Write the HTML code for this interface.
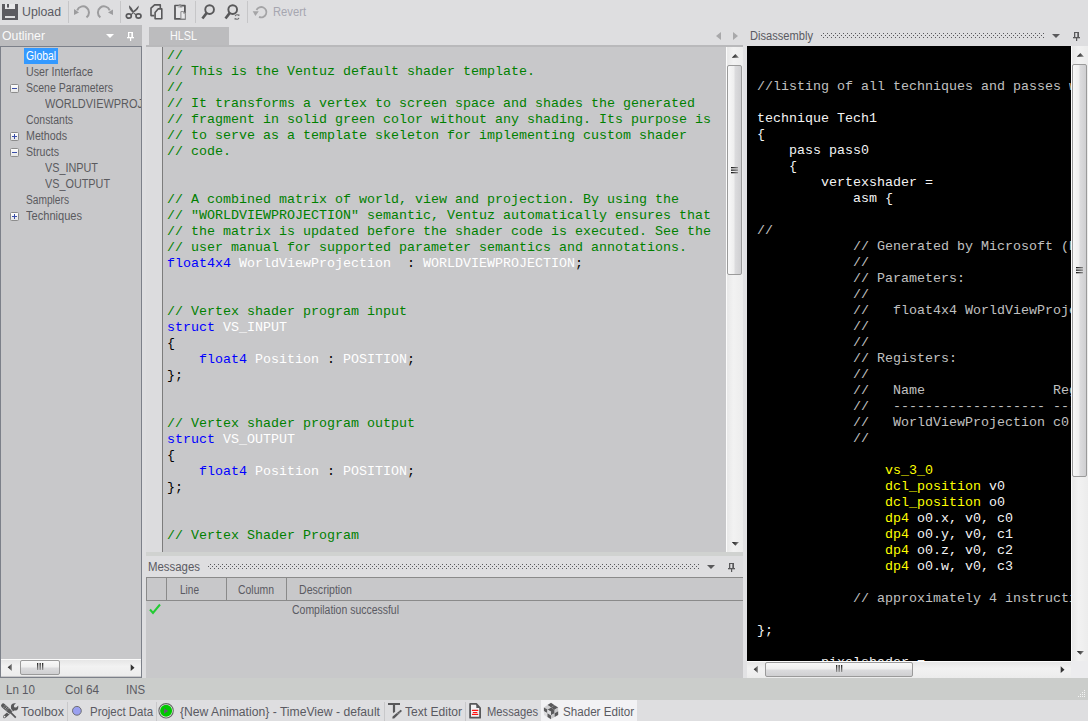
<!DOCTYPE html>
<html><head><meta charset="utf-8">
<style>
*{margin:0;padding:0;box-sizing:border-box}
html,body{width:1088px;height:721px;overflow:hidden;background:#dedee0;font-family:"Liberation Sans",sans-serif;font-size:12px;color:#4e4e50}
.a{position:absolute}
.t{position:absolute;white-space:pre;transform-origin:0 0}
.mono{font-family:"Liberation Mono",monospace;font-size:13.33px;line-height:16px;white-space:pre}
.g{color:#008000}
.k{color:#0000ff}
.w{color:#ffffff}
.b{color:#000000}
.dy{color:#ffff00}
.dw{color:#f4f4f4}
.dc{color:#c0c0c0}
</style></head><body>
<svg width="0" height="0" style="position:absolute"><defs><linearGradient id="ag" x1="0" y1="0" x2="1" y2="0"><stop offset="0" stop-color="#111"/><stop offset="1" stop-color="#8c8c8c"/></linearGradient><linearGradient id="agv" x1="0" y1="0" x2="0" y2="1"><stop offset="0" stop-color="#222"/><stop offset="1" stop-color="#9a9a9a"/></linearGradient></defs></svg>
<svg class="a" style="left:2px;top:4px" width="16" height="16" viewBox="0 0 16 16"><path d="M0 0H3V5H13V0H16V16H0Z M3 12V14H13V12Z M5 0H7V3.8H5Z" fill="#5c5b60" fill-rule="evenodd"/><path d="M3 0H5V3.8H7V0H13V5H3Z" fill="#e8e8ea"/></svg>
<div class="t" style="left:21.5px;top:5px;font-size:12px;line-height:14px;color:#5a5a62;transform:scaleX(1.025)">Upload</div>
<div class="a" style="left:68px;top:1px;width:1px;height:22px;background:#c6c6c8;"></div>
<div class="a" style="left:120px;top:1px;width:1px;height:22px;background:#c6c6c8;"></div>
<div class="a" style="left:195px;top:1px;width:1px;height:22px;background:#c6c6c8;"></div>
<div class="a" style="left:247px;top:1px;width:1px;height:22px;background:#c6c6c8;"></div>
<svg class="a" style="left:70px;top:2px" width="48" height="20" viewBox="0 0 48 20"><g fill="none" stroke="#9c9c9e" stroke-width="2"><path d="M16.5 15.4 A6.1 6.1 0 1 0 7.2 8.3"/><path d="M30.4 15.4 A6.1 6.1 0 1 1 39.7 8.3"/></g><g fill="#9c9c9e"><path d="M4 7.1 L4 13 L9 10.4Z"/><path d="M42.9 7.6 L43 13 L38 10.4Z"/></g></svg>
<svg class="a" style="left:124px;top:2px" width="20" height="20" viewBox="0 0 20 20"><g fill="#58585a"><path d="M5.2 3.2 Q4.3 6.8 8.6 10.8 L10 9.9 Q8.3 5.8 5.2 3.2Z"/><path d="M14.7 3.4 Q15.4 7.2 9.4 10.8 L8.3 9.8 Q12.6 6.2 14.7 3.4Z"/><path d="M9.2 10.2 L6.2 12.6 L7 13.4 L9.8 11Z M9.2 10.2 L12.8 12.6 L12 13.4 L8.8 11Z"/></g><g fill="none" stroke="#58585a" stroke-width="1.7"><ellipse cx="4.8" cy="14" rx="2.5" ry="2.2"/><ellipse cx="14.5" cy="14" rx="2.5" ry="2.2"/></g></svg>
<svg class="a" style="left:146px;top:2px" width="44" height="20" viewBox="0 0 44 20"><g fill="none" stroke="#58585a" stroke-width="1.6" stroke-linejoin="round"><path d="M8.3 13.6 H5 V6.2 L8.6 2.9 H14.3 V6.5"/><path d="M9.1 16.8 V10.6 L12.1 6.9 H15.8 V16.8 Z" fill="#e6e6e8"/><rect x="29" y="3.7" width="9.9" height="13.2" fill="#e6e6e8" stroke-width="1.8"/></g><path d="M31.6 5.6 L33 2.2 H35 L36.4 5.6Z" fill="#8c8c8e"/><path d="M34.9 9.6 H37.6 L39.3 11.3 V17 H34.9Z" fill="#e8e8ea" stroke="#8a8a8c" stroke-width="1"/><path d="M37.6 9.6 V11.3 H39.3" fill="none" stroke="#8a8a8c" stroke-width="0.8"/><rect x="29.8" y="4.4" width="4" height="1" fill="#e6e6e8"/></svg>
<svg class="a" style="left:198px;top:2px" width="46" height="20" viewBox="0 0 46 20"><g fill="none" stroke="#58585a" stroke-width="1.9"><circle cx="11.6" cy="7.6" r="4.35"/><circle cx="34.7" cy="7.6" r="4.35"/></g><g stroke="#58585a" stroke-width="2.6"><path d="M8.9 10.6 L4.4 16.5"/><path d="M32 10.6 L27.5 16.5"/></g><path d="M37.2 14.2 A2 2 0 0 1 40.8 13.6 M40.9 15.8 A2 2 0 0 1 37.3 16.4" fill="none" stroke="#6a6a6c" stroke-width="1.1"/><path d="M40 12.4 L41.6 12.6 L41.2 14.3Z M38 17.6 L36.4 17.4 L36.8 15.7Z" fill="#6a6a6c"/></svg>
<svg class="a" style="left:248px;top:2px" width="20" height="20" viewBox="0 0 20 20"><path d="M11 14.9 A5.2 5.2 0 1 0 8.5 8" fill="none" stroke="#a4a4a6" stroke-width="1.8"/><path d="M4.7 9.2 L10.8 9.2 L7.4 13.9Z" fill="#a4a4a6"/></svg>
<div class="t" style="left:272.5px;top:5px;font-size:12px;line-height:14px;color:#a6a6b0;transform:scaleX(0.934)">Revert</div>
<div class="a" style="left:0px;top:25px;width:142px;height:21px;background:#bcbcbe;"></div>
<div class="t" style="left:1.5px;top:29px;font-size:12px;line-height:14px;color:#fafafa;transform:scaleX(1.023)">Outliner</div>
<svg class="a" style="left:106px;top:34px" width="8" height="4" viewBox="0 0 8 4"><path d="M0 0H8L4 4Z" fill="#fff"/></svg>
<svg class="a" style="left:127px;top:32px" width="7" height="9" viewBox="0 0 7 9"><rect x="1" y="0" width="5" height="5.3" fill="#fff"/><rect x="2.3" y="1" width="2" height="4.3" fill="#bcbcbe"/><rect x="0" y="5" width="7" height="1.3" fill="#fff"/><rect x="3" y="6" width="1.2" height="3" fill="#fff"/></svg>
<div class="a" style="left:0px;top:46px;width:142px;height:632px;background:#c8c8ca;border:1px solid #7c8089"></div>
<div class="a" style="left:24px;top:48px;width:34px;height:16px;background:#3399ff;"></div>
<div class="t" style="left:25.5px;top:49px;font-size:12px;line-height:14px;color:#ffffff;transform:scaleX(0.865)">Global</div>
<div class="t" style="left:25.5px;top:65px;font-size:12px;line-height:14px;color:#5a5a5e;transform:scaleX(0.889)">User Interface</div>
<div class="t" style="left:25.5px;top:81px;font-size:12px;line-height:14px;color:#5a5a5e;transform:scaleX(0.876)">Scene Parameters</div>
<div class="t" style="left:25.5px;top:113px;font-size:12px;line-height:14px;color:#5a5a5e;transform:scaleX(0.870)">Constants</div>
<div class="t" style="left:25.5px;top:129px;font-size:12px;line-height:14px;color:#5a5a5e;transform:scaleX(0.891)">Methods</div>
<div class="t" style="left:25.5px;top:145px;font-size:12px;line-height:14px;color:#5a5a5e;transform:scaleX(0.884)">Structs</div>
<div class="t" style="left:44.5px;top:161px;font-size:12px;line-height:14px;color:#5a5a5e;transform:scaleX(0.903)">VS_INPUT</div>
<div class="t" style="left:44.5px;top:177px;font-size:12px;line-height:14px;color:#5a5a5e;transform:scaleX(0.903)">VS_OUTPUT</div>
<div class="t" style="left:25.5px;top:193px;font-size:12px;line-height:14px;color:#5a5a5e;transform:scaleX(0.848)">Samplers</div>
<div class="t" style="left:25.5px;top:209px;font-size:12px;line-height:14px;color:#5a5a5e;transform:scaleX(0.923)">Techniques</div>
<div class="a" style="left:45px;top:96px;width:96px;height:16px;overflow:hidden">
<div class="t" style="left:0;top:1px;font-size:12px;line-height:14px;color:#5a5a5e;transform:scaleX(0.913)">WORLDVIEWPROJECTION</div></div>
<svg class="a" style="left:10px;top:84px" width="9" height="9" viewBox="0 0 9 9"><defs><linearGradient id="eg" x1="0" y1="0" x2="0" y2="1"><stop offset="0" stop-color="#fff"/><stop offset="1" stop-color="#e4e4e4"/></linearGradient></defs><rect x="0.5" y="0.5" width="8" height="8" rx="1" fill="url(#eg)" stroke="#8c8c8c"/><rect x="2" y="4" width="5" height="1" fill="#3a4ea8"/></svg>
<svg class="a" style="left:10px;top:132px" width="9" height="9" viewBox="0 0 9 9"><defs><linearGradient id="eg" x1="0" y1="0" x2="0" y2="1"><stop offset="0" stop-color="#fff"/><stop offset="1" stop-color="#e4e4e4"/></linearGradient></defs><rect x="0.5" y="0.5" width="8" height="8" rx="1" fill="url(#eg)" stroke="#8c8c8c"/><rect x="2" y="4" width="5" height="1" fill="#3a4ea8"/><rect x="4" y="2" width="1" height="5" fill="#3a4ea8"/></svg>
<svg class="a" style="left:10px;top:148px" width="9" height="9" viewBox="0 0 9 9"><defs><linearGradient id="eg" x1="0" y1="0" x2="0" y2="1"><stop offset="0" stop-color="#fff"/><stop offset="1" stop-color="#e4e4e4"/></linearGradient></defs><rect x="0.5" y="0.5" width="8" height="8" rx="1" fill="url(#eg)" stroke="#8c8c8c"/><rect x="2" y="4" width="5" height="1" fill="#3a4ea8"/></svg>
<svg class="a" style="left:10px;top:212px" width="9" height="9" viewBox="0 0 9 9"><defs><linearGradient id="eg" x1="0" y1="0" x2="0" y2="1"><stop offset="0" stop-color="#fff"/><stop offset="1" stop-color="#e4e4e4"/></linearGradient></defs><rect x="0.5" y="0.5" width="8" height="8" rx="1" fill="url(#eg)" stroke="#8c8c8c"/><rect x="2" y="4" width="5" height="1" fill="#3a4ea8"/><rect x="4" y="2" width="1" height="5" fill="#3a4ea8"/></svg>
<div class="a" style="left:1px;top:659px;width:140px;height:17px;background:linear-gradient(#e6e6e6,#f2f2f2 40%,#ececec);border-top:1px solid #fbfbfb"></div>
<svg class="a" style="left:7px;top:663px" width="6" height="9" viewBox="0 0 6 9"><path d="M4.9 0.8V7.9L0.7 4.35Z" fill="url(#ag)"/></svg>
<svg class="a" style="left:130px;top:663px" width="6" height="9" viewBox="0 0 6 9"><path d="M0.7 1.3V8L4.5 4.65Z" fill="#333"/></svg>
<div class="a" style="left:20px;top:660px;width:40px;height:15px;background:linear-gradient(#f8f8f8,#eeeeee 48%,#dcdcde 52%,#cfcfd1);border:1px solid #9a9a9a;border-radius:2px"></div>
<svg class="a" style="left:36px;top:663px" width="8" height="8" viewBox="0 0 8 8"><g fill="url(#agv)"><rect x="1" y="0" width="1.3" height="7"/><rect x="3.5" y="0" width="1.3" height="7"/><rect x="6" y="0" width="1.3" height="7"/></g></svg>
<div class="a" style="left:149px;top:27px;width:80px;height:18px;background:#bcbcbe;"></div>
<div class="t" style="left:169.5px;top:29px;font-size:12px;line-height:14px;color:#fafafa;transform:scaleX(0.900)">HLSL</div>
<div class="a" style="left:146px;top:45px;width:597px;height:2px;background:#b9b9bb;"></div>
<div class="a" style="left:146px;top:47px;width:16px;height:505px;background:#dcdcde;"></div>
<div class="a" style="left:162px;top:47px;width:1px;height:505px;background:#7c7c7c;"></div>
<div class="a" style="left:163px;top:47px;width:563px;height:505px;background:#c8c8ca;"></div>
<div class="a" style="left:726px;top:47px;width:17px;height:505px;background:linear-gradient(90deg,#e8e8e8,#f2f2f2 40%,#ececec);border-left:1px solid #fbfbfb"></div>
<svg class="a" style="left:731px;top:53px" width="9" height="5" viewBox="0 0 9 5"><path d="M0.8 4.7H8L4.4 1Z" fill="url(#ag)"/></svg>
<svg class="a" style="left:731px;top:541px" width="9" height="6" viewBox="0 0 9 6"><path d="M0.8 1H8L4.4 4.8Z" fill="url(#ag)"/></svg>
<div class="a" style="left:727px;top:65px;width:15px;height:210px;background:linear-gradient(90deg,#f8f8f8,#eeeeee 48%,#dcdcde 52%,#cfcfd1);border:1px solid #9a9a9a;border-radius:2px"></div>
<svg class="a" style="left:731px;top:166px" width="8" height="8" viewBox="0 0 8 8"><g fill="url(#ag)"><rect x="0" y="1" width="7" height="1.3"/><rect x="0" y="3.5" width="7" height="1.3"/><rect x="0" y="6" width="7" height="1.3"/></g></svg>
<div class="a mono" style="left:167px;top:48px;width:559px;height:504px;overflow:hidden"><span class="g">//</span>
<span class="g">// This is the Ventuz default shader template.</span>
<span class="g">//</span>
<span class="g">// It transforms a vertex to screen space and shades the generated</span>
<span class="g">// fragment in solid green color without any shading. Its purpose is</span>
<span class="g">// to serve as a template skeleton for implementing custom shader</span>
<span class="g">// code.</span>


<span class="g">// A combined matrix of world, view and projection. By using the</span>
<span class="g">// "WORLDVIEWPROJECTION" semantic, Ventuz automatically ensures that</span>
<span class="g">// the matrix is updated before the shader code is executed. See the</span>
<span class="g">// user manual for supported parameter semantics and annotations.</span>
<span class="k">float4x4</span> <span class="w">WorldViewProjection</span>  <span class="b">:</span> <span class="w">WORLDVIEWPROJECTION</span><span class="b">;</span>


<span class="g">// Vertex shader program input</span>
<span class="k">struct</span> <span class="w">VS_INPUT</span>
<span class="b">{</span>
    <span class="k">float4</span> <span class="w">Position</span> <span class="b">:</span> <span class="w">POSITION</span><span class="b">;</span>
<span class="b">};</span>


<span class="g">// Vertex shader program output</span>
<span class="k">struct</span> <span class="w">VS_OUTPUT</span>
<span class="b">{</span>
    <span class="k">float4</span> <span class="w">Position</span> <span class="b">:</span> <span class="w">POSITION</span><span class="b">;</span>
<span class="b">};</span>


<span class="g">// Vertex Shader Program</span></div>
<div class="a" style="left:146px;top:552px;width:597px;height:4px;background:#d0d2d0;"></div>
<div class="t" style="left:147.5px;top:560px;font-size:12px;line-height:14px;color:#5a5a62;transform:scaleX(0.951)">Messages</div>
<svg class="a" style="left:208px;top:564px" width="492" height="5" viewBox="0 0 492 5"><g fill="#58585c"><rect x="2" y="0" width="1" height="1"/><rect x="2" y="4" width="1" height="1"/><rect x="0" y="2" width="1" height="1"/><rect x="6" y="0" width="1" height="1"/><rect x="6" y="4" width="1" height="1"/><rect x="4" y="2" width="1" height="1"/><rect x="10" y="0" width="1" height="1"/><rect x="10" y="4" width="1" height="1"/><rect x="8" y="2" width="1" height="1"/><rect x="14" y="0" width="1" height="1"/><rect x="14" y="4" width="1" height="1"/><rect x="12" y="2" width="1" height="1"/><rect x="18" y="0" width="1" height="1"/><rect x="18" y="4" width="1" height="1"/><rect x="16" y="2" width="1" height="1"/><rect x="22" y="0" width="1" height="1"/><rect x="22" y="4" width="1" height="1"/><rect x="20" y="2" width="1" height="1"/><rect x="26" y="0" width="1" height="1"/><rect x="26" y="4" width="1" height="1"/><rect x="24" y="2" width="1" height="1"/><rect x="30" y="0" width="1" height="1"/><rect x="30" y="4" width="1" height="1"/><rect x="28" y="2" width="1" height="1"/><rect x="34" y="0" width="1" height="1"/><rect x="34" y="4" width="1" height="1"/><rect x="32" y="2" width="1" height="1"/><rect x="38" y="0" width="1" height="1"/><rect x="38" y="4" width="1" height="1"/><rect x="36" y="2" width="1" height="1"/><rect x="42" y="0" width="1" height="1"/><rect x="42" y="4" width="1" height="1"/><rect x="40" y="2" width="1" height="1"/><rect x="46" y="0" width="1" height="1"/><rect x="46" y="4" width="1" height="1"/><rect x="44" y="2" width="1" height="1"/><rect x="50" y="0" width="1" height="1"/><rect x="50" y="4" width="1" height="1"/><rect x="48" y="2" width="1" height="1"/><rect x="54" y="0" width="1" height="1"/><rect x="54" y="4" width="1" height="1"/><rect x="52" y="2" width="1" height="1"/><rect x="58" y="0" width="1" height="1"/><rect x="58" y="4" width="1" height="1"/><rect x="56" y="2" width="1" height="1"/><rect x="62" y="0" width="1" height="1"/><rect x="62" y="4" width="1" height="1"/><rect x="60" y="2" width="1" height="1"/><rect x="66" y="0" width="1" height="1"/><rect x="66" y="4" width="1" height="1"/><rect x="64" y="2" width="1" height="1"/><rect x="70" y="0" width="1" height="1"/><rect x="70" y="4" width="1" height="1"/><rect x="68" y="2" width="1" height="1"/><rect x="74" y="0" width="1" height="1"/><rect x="74" y="4" width="1" height="1"/><rect x="72" y="2" width="1" height="1"/><rect x="78" y="0" width="1" height="1"/><rect x="78" y="4" width="1" height="1"/><rect x="76" y="2" width="1" height="1"/><rect x="82" y="0" width="1" height="1"/><rect x="82" y="4" width="1" height="1"/><rect x="80" y="2" width="1" height="1"/><rect x="86" y="0" width="1" height="1"/><rect x="86" y="4" width="1" height="1"/><rect x="84" y="2" width="1" height="1"/><rect x="90" y="0" width="1" height="1"/><rect x="90" y="4" width="1" height="1"/><rect x="88" y="2" width="1" height="1"/><rect x="94" y="0" width="1" height="1"/><rect x="94" y="4" width="1" height="1"/><rect x="92" y="2" width="1" height="1"/><rect x="98" y="0" width="1" height="1"/><rect x="98" y="4" width="1" height="1"/><rect x="96" y="2" width="1" height="1"/><rect x="102" y="0" width="1" height="1"/><rect x="102" y="4" width="1" height="1"/><rect x="100" y="2" width="1" height="1"/><rect x="106" y="0" width="1" height="1"/><rect x="106" y="4" width="1" height="1"/><rect x="104" y="2" width="1" height="1"/><rect x="110" y="0" width="1" height="1"/><rect x="110" y="4" width="1" height="1"/><rect x="108" y="2" width="1" height="1"/><rect x="114" y="0" width="1" height="1"/><rect x="114" y="4" width="1" height="1"/><rect x="112" y="2" width="1" height="1"/><rect x="118" y="0" width="1" height="1"/><rect x="118" y="4" width="1" height="1"/><rect x="116" y="2" width="1" height="1"/><rect x="122" y="0" width="1" height="1"/><rect x="122" y="4" width="1" height="1"/><rect x="120" y="2" width="1" height="1"/><rect x="126" y="0" width="1" height="1"/><rect x="126" y="4" width="1" height="1"/><rect x="124" y="2" width="1" height="1"/><rect x="130" y="0" width="1" height="1"/><rect x="130" y="4" width="1" height="1"/><rect x="128" y="2" width="1" height="1"/><rect x="134" y="0" width="1" height="1"/><rect x="134" y="4" width="1" height="1"/><rect x="132" y="2" width="1" height="1"/><rect x="138" y="0" width="1" height="1"/><rect x="138" y="4" width="1" height="1"/><rect x="136" y="2" width="1" height="1"/><rect x="142" y="0" width="1" height="1"/><rect x="142" y="4" width="1" height="1"/><rect x="140" y="2" width="1" height="1"/><rect x="146" y="0" width="1" height="1"/><rect x="146" y="4" width="1" height="1"/><rect x="144" y="2" width="1" height="1"/><rect x="150" y="0" width="1" height="1"/><rect x="150" y="4" width="1" height="1"/><rect x="148" y="2" width="1" height="1"/><rect x="154" y="0" width="1" height="1"/><rect x="154" y="4" width="1" height="1"/><rect x="152" y="2" width="1" height="1"/><rect x="158" y="0" width="1" height="1"/><rect x="158" y="4" width="1" height="1"/><rect x="156" y="2" width="1" height="1"/><rect x="162" y="0" width="1" height="1"/><rect x="162" y="4" width="1" height="1"/><rect x="160" y="2" width="1" height="1"/><rect x="166" y="0" width="1" height="1"/><rect x="166" y="4" width="1" height="1"/><rect x="164" y="2" width="1" height="1"/><rect x="170" y="0" width="1" height="1"/><rect x="170" y="4" width="1" height="1"/><rect x="168" y="2" width="1" height="1"/><rect x="174" y="0" width="1" height="1"/><rect x="174" y="4" width="1" height="1"/><rect x="172" y="2" width="1" height="1"/><rect x="178" y="0" width="1" height="1"/><rect x="178" y="4" width="1" height="1"/><rect x="176" y="2" width="1" height="1"/><rect x="182" y="0" width="1" height="1"/><rect x="182" y="4" width="1" height="1"/><rect x="180" y="2" width="1" height="1"/><rect x="186" y="0" width="1" height="1"/><rect x="186" y="4" width="1" height="1"/><rect x="184" y="2" width="1" height="1"/><rect x="190" y="0" width="1" height="1"/><rect x="190" y="4" width="1" height="1"/><rect x="188" y="2" width="1" height="1"/><rect x="194" y="0" width="1" height="1"/><rect x="194" y="4" width="1" height="1"/><rect x="192" y="2" width="1" height="1"/><rect x="198" y="0" width="1" height="1"/><rect x="198" y="4" width="1" height="1"/><rect x="196" y="2" width="1" height="1"/><rect x="202" y="0" width="1" height="1"/><rect x="202" y="4" width="1" height="1"/><rect x="200" y="2" width="1" height="1"/><rect x="206" y="0" width="1" height="1"/><rect x="206" y="4" width="1" height="1"/><rect x="204" y="2" width="1" height="1"/><rect x="210" y="0" width="1" height="1"/><rect x="210" y="4" width="1" height="1"/><rect x="208" y="2" width="1" height="1"/><rect x="214" y="0" width="1" height="1"/><rect x="214" y="4" width="1" height="1"/><rect x="212" y="2" width="1" height="1"/><rect x="218" y="0" width="1" height="1"/><rect x="218" y="4" width="1" height="1"/><rect x="216" y="2" width="1" height="1"/><rect x="222" y="0" width="1" height="1"/><rect x="222" y="4" width="1" height="1"/><rect x="220" y="2" width="1" height="1"/><rect x="226" y="0" width="1" height="1"/><rect x="226" y="4" width="1" height="1"/><rect x="224" y="2" width="1" height="1"/><rect x="230" y="0" width="1" height="1"/><rect x="230" y="4" width="1" height="1"/><rect x="228" y="2" width="1" height="1"/><rect x="234" y="0" width="1" height="1"/><rect x="234" y="4" width="1" height="1"/><rect x="232" y="2" width="1" height="1"/><rect x="238" y="0" width="1" height="1"/><rect x="238" y="4" width="1" height="1"/><rect x="236" y="2" width="1" height="1"/><rect x="242" y="0" width="1" height="1"/><rect x="242" y="4" width="1" height="1"/><rect x="240" y="2" width="1" height="1"/><rect x="246" y="0" width="1" height="1"/><rect x="246" y="4" width="1" height="1"/><rect x="244" y="2" width="1" height="1"/><rect x="250" y="0" width="1" height="1"/><rect x="250" y="4" width="1" height="1"/><rect x="248" y="2" width="1" height="1"/><rect x="254" y="0" width="1" height="1"/><rect x="254" y="4" width="1" height="1"/><rect x="252" y="2" width="1" height="1"/><rect x="258" y="0" width="1" height="1"/><rect x="258" y="4" width="1" height="1"/><rect x="256" y="2" width="1" height="1"/><rect x="262" y="0" width="1" height="1"/><rect x="262" y="4" width="1" height="1"/><rect x="260" y="2" width="1" height="1"/><rect x="266" y="0" width="1" height="1"/><rect x="266" y="4" width="1" height="1"/><rect x="264" y="2" width="1" height="1"/><rect x="270" y="0" width="1" height="1"/><rect x="270" y="4" width="1" height="1"/><rect x="268" y="2" width="1" height="1"/><rect x="274" y="0" width="1" height="1"/><rect x="274" y="4" width="1" height="1"/><rect x="272" y="2" width="1" height="1"/><rect x="278" y="0" width="1" height="1"/><rect x="278" y="4" width="1" height="1"/><rect x="276" y="2" width="1" height="1"/><rect x="282" y="0" width="1" height="1"/><rect x="282" y="4" width="1" height="1"/><rect x="280" y="2" width="1" height="1"/><rect x="286" y="0" width="1" height="1"/><rect x="286" y="4" width="1" height="1"/><rect x="284" y="2" width="1" height="1"/><rect x="290" y="0" width="1" height="1"/><rect x="290" y="4" width="1" height="1"/><rect x="288" y="2" width="1" height="1"/><rect x="294" y="0" width="1" height="1"/><rect x="294" y="4" width="1" height="1"/><rect x="292" y="2" width="1" height="1"/><rect x="298" y="0" width="1" height="1"/><rect x="298" y="4" width="1" height="1"/><rect x="296" y="2" width="1" height="1"/><rect x="302" y="0" width="1" height="1"/><rect x="302" y="4" width="1" height="1"/><rect x="300" y="2" width="1" height="1"/><rect x="306" y="0" width="1" height="1"/><rect x="306" y="4" width="1" height="1"/><rect x="304" y="2" width="1" height="1"/><rect x="310" y="0" width="1" height="1"/><rect x="310" y="4" width="1" height="1"/><rect x="308" y="2" width="1" height="1"/><rect x="314" y="0" width="1" height="1"/><rect x="314" y="4" width="1" height="1"/><rect x="312" y="2" width="1" height="1"/><rect x="318" y="0" width="1" height="1"/><rect x="318" y="4" width="1" height="1"/><rect x="316" y="2" width="1" height="1"/><rect x="322" y="0" width="1" height="1"/><rect x="322" y="4" width="1" height="1"/><rect x="320" y="2" width="1" height="1"/><rect x="326" y="0" width="1" height="1"/><rect x="326" y="4" width="1" height="1"/><rect x="324" y="2" width="1" height="1"/><rect x="330" y="0" width="1" height="1"/><rect x="330" y="4" width="1" height="1"/><rect x="328" y="2" width="1" height="1"/><rect x="334" y="0" width="1" height="1"/><rect x="334" y="4" width="1" height="1"/><rect x="332" y="2" width="1" height="1"/><rect x="338" y="0" width="1" height="1"/><rect x="338" y="4" width="1" height="1"/><rect x="336" y="2" width="1" height="1"/><rect x="342" y="0" width="1" height="1"/><rect x="342" y="4" width="1" height="1"/><rect x="340" y="2" width="1" height="1"/><rect x="346" y="0" width="1" height="1"/><rect x="346" y="4" width="1" height="1"/><rect x="344" y="2" width="1" height="1"/><rect x="350" y="0" width="1" height="1"/><rect x="350" y="4" width="1" height="1"/><rect x="348" y="2" width="1" height="1"/><rect x="354" y="0" width="1" height="1"/><rect x="354" y="4" width="1" height="1"/><rect x="352" y="2" width="1" height="1"/><rect x="358" y="0" width="1" height="1"/><rect x="358" y="4" width="1" height="1"/><rect x="356" y="2" width="1" height="1"/><rect x="362" y="0" width="1" height="1"/><rect x="362" y="4" width="1" height="1"/><rect x="360" y="2" width="1" height="1"/><rect x="366" y="0" width="1" height="1"/><rect x="366" y="4" width="1" height="1"/><rect x="364" y="2" width="1" height="1"/><rect x="370" y="0" width="1" height="1"/><rect x="370" y="4" width="1" height="1"/><rect x="368" y="2" width="1" height="1"/><rect x="374" y="0" width="1" height="1"/><rect x="374" y="4" width="1" height="1"/><rect x="372" y="2" width="1" height="1"/><rect x="378" y="0" width="1" height="1"/><rect x="378" y="4" width="1" height="1"/><rect x="376" y="2" width="1" height="1"/><rect x="382" y="0" width="1" height="1"/><rect x="382" y="4" width="1" height="1"/><rect x="380" y="2" width="1" height="1"/><rect x="386" y="0" width="1" height="1"/><rect x="386" y="4" width="1" height="1"/><rect x="384" y="2" width="1" height="1"/><rect x="390" y="0" width="1" height="1"/><rect x="390" y="4" width="1" height="1"/><rect x="388" y="2" width="1" height="1"/><rect x="394" y="0" width="1" height="1"/><rect x="394" y="4" width="1" height="1"/><rect x="392" y="2" width="1" height="1"/><rect x="398" y="0" width="1" height="1"/><rect x="398" y="4" width="1" height="1"/><rect x="396" y="2" width="1" height="1"/><rect x="402" y="0" width="1" height="1"/><rect x="402" y="4" width="1" height="1"/><rect x="400" y="2" width="1" height="1"/><rect x="406" y="0" width="1" height="1"/><rect x="406" y="4" width="1" height="1"/><rect x="404" y="2" width="1" height="1"/><rect x="410" y="0" width="1" height="1"/><rect x="410" y="4" width="1" height="1"/><rect x="408" y="2" width="1" height="1"/><rect x="414" y="0" width="1" height="1"/><rect x="414" y="4" width="1" height="1"/><rect x="412" y="2" width="1" height="1"/><rect x="418" y="0" width="1" height="1"/><rect x="418" y="4" width="1" height="1"/><rect x="416" y="2" width="1" height="1"/><rect x="422" y="0" width="1" height="1"/><rect x="422" y="4" width="1" height="1"/><rect x="420" y="2" width="1" height="1"/><rect x="426" y="0" width="1" height="1"/><rect x="426" y="4" width="1" height="1"/><rect x="424" y="2" width="1" height="1"/><rect x="430" y="0" width="1" height="1"/><rect x="430" y="4" width="1" height="1"/><rect x="428" y="2" width="1" height="1"/><rect x="434" y="0" width="1" height="1"/><rect x="434" y="4" width="1" height="1"/><rect x="432" y="2" width="1" height="1"/><rect x="438" y="0" width="1" height="1"/><rect x="438" y="4" width="1" height="1"/><rect x="436" y="2" width="1" height="1"/><rect x="442" y="0" width="1" height="1"/><rect x="442" y="4" width="1" height="1"/><rect x="440" y="2" width="1" height="1"/><rect x="446" y="0" width="1" height="1"/><rect x="446" y="4" width="1" height="1"/><rect x="444" y="2" width="1" height="1"/><rect x="450" y="0" width="1" height="1"/><rect x="450" y="4" width="1" height="1"/><rect x="448" y="2" width="1" height="1"/><rect x="454" y="0" width="1" height="1"/><rect x="454" y="4" width="1" height="1"/><rect x="452" y="2" width="1" height="1"/><rect x="458" y="0" width="1" height="1"/><rect x="458" y="4" width="1" height="1"/><rect x="456" y="2" width="1" height="1"/><rect x="462" y="0" width="1" height="1"/><rect x="462" y="4" width="1" height="1"/><rect x="460" y="2" width="1" height="1"/><rect x="466" y="0" width="1" height="1"/><rect x="466" y="4" width="1" height="1"/><rect x="464" y="2" width="1" height="1"/><rect x="470" y="0" width="1" height="1"/><rect x="470" y="4" width="1" height="1"/><rect x="468" y="2" width="1" height="1"/><rect x="474" y="0" width="1" height="1"/><rect x="474" y="4" width="1" height="1"/><rect x="472" y="2" width="1" height="1"/><rect x="478" y="0" width="1" height="1"/><rect x="478" y="4" width="1" height="1"/><rect x="476" y="2" width="1" height="1"/><rect x="482" y="0" width="1" height="1"/><rect x="482" y="4" width="1" height="1"/><rect x="480" y="2" width="1" height="1"/><rect x="486" y="0" width="1" height="1"/><rect x="486" y="4" width="1" height="1"/><rect x="484" y="2" width="1" height="1"/><rect x="490" y="0" width="1" height="1"/><rect x="490" y="4" width="1" height="1"/><rect x="488" y="2" width="1" height="1"/></g></svg>
<svg class="a" style="left:707px;top:565px" width="8" height="4" viewBox="0 0 8 4"><path d="M0 0H8L4 4Z" fill="#59595b"/></svg>
<svg class="a" style="left:728px;top:563px" width="7" height="9" viewBox="0 0 7 9"><rect x="1" y="0" width="5" height="5.3" fill="#59595b"/><rect x="2.3" y="1" width="2" height="4.3" fill="#dedee0"/><rect x="0" y="5" width="7" height="1.3" fill="#59595b"/><rect x="3" y="6" width="1.2" height="3" fill="#59595b"/></svg>
<div class="a" style="left:146px;top:577px;width:597px;height:101px;background:#c8c8ca;"></div>
<div class="a" style="left:146px;top:577px;width:597px;height:1px;background:#8a8a8a;"></div>
<div class="a" style="left:146px;top:600px;width:597px;height:1px;background:#8a8a8a;"></div>
<div class="a" style="left:146px;top:577px;width:1px;height:24px;background:#8a8a8a;"></div>
<div class="a" style="left:166px;top:578px;width:1px;height:22px;background:#8a8a8a;"></div>
<div class="a" style="left:226px;top:578px;width:1px;height:22px;background:#8a8a8a;"></div>
<div class="a" style="left:286px;top:578px;width:1px;height:22px;background:#8a8a8a;"></div>
<div class="t" style="left:179.5px;top:583px;font-size:12px;line-height:14px;color:#5a5a62;transform:scaleX(0.837)">Line</div>
<div class="t" style="left:237.5px;top:583px;font-size:12px;line-height:14px;color:#5a5a62;transform:scaleX(0.870)">Column</div>
<div class="t" style="left:298.5px;top:583px;font-size:12px;line-height:14px;color:#5a5a62;transform:scaleX(0.883)">Description</div>
<svg class="a" style="left:149px;top:603px" width="12" height="12" viewBox="0 0 12 12"><path d="M1 6.5 L4 10 L11 1.5" fill="none" stroke="#22cc33" stroke-width="2"/></svg>
<div class="t" style="left:291.5px;top:603px;font-size:12px;line-height:14px;color:#5a5a62;transform:scaleX(0.872)">Compilation successful</div>
<svg class="a" style="left:716px;top:32px" width="5" height="8" viewBox="0 0 5 8"><path d="M5 0V8L0 4Z" fill="#a8a8aa"/></svg>
<svg class="a" style="left:733px;top:32px" width="5" height="8" viewBox="0 0 5 8"><path d="M0 0V8L5 4Z" fill="#a8a8aa"/></svg>
<div class="t" style="left:749.5px;top:29px;font-size:12px;line-height:14px;color:#5a5a62;transform:scaleX(0.926)">Disassembly</div>
<svg class="a" style="left:821px;top:33px" width="224" height="5" viewBox="0 0 224 5"><g fill="#58585c"><rect x="2" y="0" width="1" height="1"/><rect x="2" y="4" width="1" height="1"/><rect x="0" y="2" width="1" height="1"/><rect x="6" y="0" width="1" height="1"/><rect x="6" y="4" width="1" height="1"/><rect x="4" y="2" width="1" height="1"/><rect x="10" y="0" width="1" height="1"/><rect x="10" y="4" width="1" height="1"/><rect x="8" y="2" width="1" height="1"/><rect x="14" y="0" width="1" height="1"/><rect x="14" y="4" width="1" height="1"/><rect x="12" y="2" width="1" height="1"/><rect x="18" y="0" width="1" height="1"/><rect x="18" y="4" width="1" height="1"/><rect x="16" y="2" width="1" height="1"/><rect x="22" y="0" width="1" height="1"/><rect x="22" y="4" width="1" height="1"/><rect x="20" y="2" width="1" height="1"/><rect x="26" y="0" width="1" height="1"/><rect x="26" y="4" width="1" height="1"/><rect x="24" y="2" width="1" height="1"/><rect x="30" y="0" width="1" height="1"/><rect x="30" y="4" width="1" height="1"/><rect x="28" y="2" width="1" height="1"/><rect x="34" y="0" width="1" height="1"/><rect x="34" y="4" width="1" height="1"/><rect x="32" y="2" width="1" height="1"/><rect x="38" y="0" width="1" height="1"/><rect x="38" y="4" width="1" height="1"/><rect x="36" y="2" width="1" height="1"/><rect x="42" y="0" width="1" height="1"/><rect x="42" y="4" width="1" height="1"/><rect x="40" y="2" width="1" height="1"/><rect x="46" y="0" width="1" height="1"/><rect x="46" y="4" width="1" height="1"/><rect x="44" y="2" width="1" height="1"/><rect x="50" y="0" width="1" height="1"/><rect x="50" y="4" width="1" height="1"/><rect x="48" y="2" width="1" height="1"/><rect x="54" y="0" width="1" height="1"/><rect x="54" y="4" width="1" height="1"/><rect x="52" y="2" width="1" height="1"/><rect x="58" y="0" width="1" height="1"/><rect x="58" y="4" width="1" height="1"/><rect x="56" y="2" width="1" height="1"/><rect x="62" y="0" width="1" height="1"/><rect x="62" y="4" width="1" height="1"/><rect x="60" y="2" width="1" height="1"/><rect x="66" y="0" width="1" height="1"/><rect x="66" y="4" width="1" height="1"/><rect x="64" y="2" width="1" height="1"/><rect x="70" y="0" width="1" height="1"/><rect x="70" y="4" width="1" height="1"/><rect x="68" y="2" width="1" height="1"/><rect x="74" y="0" width="1" height="1"/><rect x="74" y="4" width="1" height="1"/><rect x="72" y="2" width="1" height="1"/><rect x="78" y="0" width="1" height="1"/><rect x="78" y="4" width="1" height="1"/><rect x="76" y="2" width="1" height="1"/><rect x="82" y="0" width="1" height="1"/><rect x="82" y="4" width="1" height="1"/><rect x="80" y="2" width="1" height="1"/><rect x="86" y="0" width="1" height="1"/><rect x="86" y="4" width="1" height="1"/><rect x="84" y="2" width="1" height="1"/><rect x="90" y="0" width="1" height="1"/><rect x="90" y="4" width="1" height="1"/><rect x="88" y="2" width="1" height="1"/><rect x="94" y="0" width="1" height="1"/><rect x="94" y="4" width="1" height="1"/><rect x="92" y="2" width="1" height="1"/><rect x="98" y="0" width="1" height="1"/><rect x="98" y="4" width="1" height="1"/><rect x="96" y="2" width="1" height="1"/><rect x="102" y="0" width="1" height="1"/><rect x="102" y="4" width="1" height="1"/><rect x="100" y="2" width="1" height="1"/><rect x="106" y="0" width="1" height="1"/><rect x="106" y="4" width="1" height="1"/><rect x="104" y="2" width="1" height="1"/><rect x="110" y="0" width="1" height="1"/><rect x="110" y="4" width="1" height="1"/><rect x="108" y="2" width="1" height="1"/><rect x="114" y="0" width="1" height="1"/><rect x="114" y="4" width="1" height="1"/><rect x="112" y="2" width="1" height="1"/><rect x="118" y="0" width="1" height="1"/><rect x="118" y="4" width="1" height="1"/><rect x="116" y="2" width="1" height="1"/><rect x="122" y="0" width="1" height="1"/><rect x="122" y="4" width="1" height="1"/><rect x="120" y="2" width="1" height="1"/><rect x="126" y="0" width="1" height="1"/><rect x="126" y="4" width="1" height="1"/><rect x="124" y="2" width="1" height="1"/><rect x="130" y="0" width="1" height="1"/><rect x="130" y="4" width="1" height="1"/><rect x="128" y="2" width="1" height="1"/><rect x="134" y="0" width="1" height="1"/><rect x="134" y="4" width="1" height="1"/><rect x="132" y="2" width="1" height="1"/><rect x="138" y="0" width="1" height="1"/><rect x="138" y="4" width="1" height="1"/><rect x="136" y="2" width="1" height="1"/><rect x="142" y="0" width="1" height="1"/><rect x="142" y="4" width="1" height="1"/><rect x="140" y="2" width="1" height="1"/><rect x="146" y="0" width="1" height="1"/><rect x="146" y="4" width="1" height="1"/><rect x="144" y="2" width="1" height="1"/><rect x="150" y="0" width="1" height="1"/><rect x="150" y="4" width="1" height="1"/><rect x="148" y="2" width="1" height="1"/><rect x="154" y="0" width="1" height="1"/><rect x="154" y="4" width="1" height="1"/><rect x="152" y="2" width="1" height="1"/><rect x="158" y="0" width="1" height="1"/><rect x="158" y="4" width="1" height="1"/><rect x="156" y="2" width="1" height="1"/><rect x="162" y="0" width="1" height="1"/><rect x="162" y="4" width="1" height="1"/><rect x="160" y="2" width="1" height="1"/><rect x="166" y="0" width="1" height="1"/><rect x="166" y="4" width="1" height="1"/><rect x="164" y="2" width="1" height="1"/><rect x="170" y="0" width="1" height="1"/><rect x="170" y="4" width="1" height="1"/><rect x="168" y="2" width="1" height="1"/><rect x="174" y="0" width="1" height="1"/><rect x="174" y="4" width="1" height="1"/><rect x="172" y="2" width="1" height="1"/><rect x="178" y="0" width="1" height="1"/><rect x="178" y="4" width="1" height="1"/><rect x="176" y="2" width="1" height="1"/><rect x="182" y="0" width="1" height="1"/><rect x="182" y="4" width="1" height="1"/><rect x="180" y="2" width="1" height="1"/><rect x="186" y="0" width="1" height="1"/><rect x="186" y="4" width="1" height="1"/><rect x="184" y="2" width="1" height="1"/><rect x="190" y="0" width="1" height="1"/><rect x="190" y="4" width="1" height="1"/><rect x="188" y="2" width="1" height="1"/><rect x="194" y="0" width="1" height="1"/><rect x="194" y="4" width="1" height="1"/><rect x="192" y="2" width="1" height="1"/><rect x="198" y="0" width="1" height="1"/><rect x="198" y="4" width="1" height="1"/><rect x="196" y="2" width="1" height="1"/><rect x="202" y="0" width="1" height="1"/><rect x="202" y="4" width="1" height="1"/><rect x="200" y="2" width="1" height="1"/><rect x="206" y="0" width="1" height="1"/><rect x="206" y="4" width="1" height="1"/><rect x="204" y="2" width="1" height="1"/><rect x="210" y="0" width="1" height="1"/><rect x="210" y="4" width="1" height="1"/><rect x="208" y="2" width="1" height="1"/><rect x="214" y="0" width="1" height="1"/><rect x="214" y="4" width="1" height="1"/><rect x="212" y="2" width="1" height="1"/><rect x="218" y="0" width="1" height="1"/><rect x="218" y="4" width="1" height="1"/><rect x="216" y="2" width="1" height="1"/><rect x="222" y="0" width="1" height="1"/><rect x="222" y="4" width="1" height="1"/><rect x="220" y="2" width="1" height="1"/></g></svg>
<svg class="a" style="left:1052px;top:34px" width="8" height="4" viewBox="0 0 8 4"><path d="M0 0H8L4 4Z" fill="#59595b"/></svg>
<svg class="a" style="left:1073px;top:32px" width="7" height="9" viewBox="0 0 7 9"><rect x="1" y="0" width="5" height="5.3" fill="#59595b"/><rect x="2.3" y="1" width="2" height="4.3" fill="#dedee0"/><rect x="0" y="5" width="7" height="1.3" fill="#59595b"/><rect x="3" y="6" width="1.2" height="3" fill="#59595b"/></svg>
<div class="a" style="left:743px;top:46px;width:4px;height:632px;background:#e2e2e4;"></div>
<div class="a" style="left:747px;top:46px;width:324px;height:615px;background:#000;"></div>
<div class="a mono dw" style="left:757px;top:47px;width:314px;height:614px;overflow:hidden">

<span class="dc">//listing of all techniques and passes with embedded asm listings</span>

technique Tech1
{
    pass pass0
    {
        vertexshader =
            asm {

<span class="dc">//</span>
            <span class="dc">// Generated by Microsoft (R) HLSL Shader Compiler</span>
            <span class="dc">//</span>
            <span class="dc">// Parameters:</span>
            <span class="dc">//</span>
            <span class="dc">//   float4x4 WorldViewProjection;</span>
            <span class="dc">//</span>
            <span class="dc">//</span>
            <span class="dc">// Registers:</span>
            <span class="dc">//</span>
            <span class="dc">//   Name                Reg   Size</span>
            <span class="dc">//   ------------------- ----- ----</span>
            <span class="dc">//   WorldViewProjection c0       4</span>
            <span class="dc">//</span>

                <span class="dy">vs_3_0</span>
                <span class="dy">dcl_position</span> v0
                <span class="dy">dcl_position</span> o0
                <span class="dy">dp4</span> o0.x, v0, c0
                <span class="dy">dp4</span> o0.y, v0, c1
                <span class="dy">dp4</span> o0.z, v0, c2
                <span class="dy">dp4</span> o0.w, v0, c3

            <span class="dc">// approximately 4 instruction slots used</span>

};

        pixelshader =</div>
<div class="a" style="left:1071px;top:46px;width:1px;height:615px;background:#f8f8f8;"></div>
<div class="a" style="left:1071px;top:46px;width:17px;height:615px;background:linear-gradient(90deg,#e8e8e8,#f2f2f2 40%,#ececec);border-left:1px solid #fbfbfb"></div>
<svg class="a" style="left:1076px;top:52px" width="9" height="5" viewBox="0 0 9 5"><path d="M0.8 4.7H8L4.4 1Z" fill="url(#ag)"/></svg>
<svg class="a" style="left:1076px;top:650px" width="9" height="6" viewBox="0 0 9 6"><path d="M0.8 1H8L4.4 4.8Z" fill="url(#ag)"/></svg>
<div class="a" style="left:1072px;top:64px;width:15px;height:413px;background:linear-gradient(90deg,#f8f8f8,#eeeeee 48%,#dcdcde 52%,#cfcfd1);border:1px solid #9a9a9a;border-radius:2px"></div>
<svg class="a" style="left:1076px;top:266px" width="8" height="8" viewBox="0 0 8 8"><g fill="url(#ag)"><rect x="0" y="1" width="7" height="1.3"/><rect x="0" y="3.5" width="7" height="1.3"/><rect x="0" y="6" width="7" height="1.3"/></g></svg>
<div class="a" style="left:747px;top:661px;width:324px;height:17px;background:linear-gradient(#e6e6e6,#f2f2f2 40%,#ececec);border-top:1px solid #fbfbfb"></div>
<svg class="a" style="left:753px;top:665px" width="6" height="9" viewBox="0 0 6 9"><path d="M4.9 0.8V7.9L0.7 4.35Z" fill="url(#ag)"/></svg>
<svg class="a" style="left:1060px;top:665px" width="6" height="9" viewBox="0 0 6 9"><path d="M0.7 1.3V8L4.5 4.65Z" fill="#333"/></svg>
<div class="a" style="left:765px;top:662px;width:148px;height:15px;background:linear-gradient(#f8f8f8,#eeeeee 48%,#dcdcde 52%,#cfcfd1);border:1px solid #9a9a9a;border-radius:2px"></div>
<svg class="a" style="left:835px;top:665px" width="8" height="8" viewBox="0 0 8 8"><g fill="url(#agv)"><rect x="1" y="0" width="1.3" height="7"/><rect x="3.5" y="0" width="1.3" height="7"/><rect x="6" y="0" width="1.3" height="7"/></g></svg>
<div class="a" style="left:1071px;top:661px;width:17px;height:17px;background:#ececee;"></div>
<div class="a" style="left:0px;top:678px;width:1088px;height:22px;background:#cbcdcb;"></div>
<div class="t" style="left:5.5px;top:683px;font-size:12px;line-height:14px;color:#5a5a62;transform:scaleX(0.966)">Ln 10</div>
<div class="t" style="left:64.5px;top:683px;font-size:12px;line-height:14px;color:#5a5a62;transform:scaleX(0.980)">Col 64</div>
<div class="t" style="left:125.5px;top:683px;font-size:12px;line-height:14px;color:#5a5a62;transform:scaleX(0.950)">INS</div>
<svg class="a" style="left:1076px;top:688px" width="10" height="10" viewBox="0 0 10 10"><g fill="#f4f4f4"><rect x="8" y="2" width="1" height="1"/><rect x="6" y="4" width="1" height="1"/><rect x="8" y="4" width="1" height="1"/><rect x="4" y="6" width="1" height="1"/><rect x="6" y="6" width="1" height="1"/><rect x="8" y="6" width="1" height="1"/><rect x="2" y="8" width="1" height="1"/><rect x="4" y="8" width="1" height="1"/><rect x="6" y="8" width="1" height="1"/><rect x="8" y="8" width="1" height="1"/></g></svg>
<div class="a" style="left:0px;top:700px;width:1088px;height:21px;background:#dedee0;"></div>
<svg class="a" style="left:0px;top:701px" width="20" height="20" viewBox="0 0 20 20"><circle cx="14.6" cy="5.9" r="3.7" fill="#58585a"/><path d="M12.5 8.8 L4.6 15.6" stroke="#58585a" stroke-width="3.2" stroke-linecap="round"/><circle cx="15.4" cy="5.1" r="1.5" fill="#dedee0"/><path d="M14.3 4 L17 1.3 L19.2 3.5 L16.5 6.2Z" fill="#dedee0"/><circle cx="4.5" cy="15.6" r="0.9" fill="#e8e8e8"/><path d="M3.2 4.6 L9.8 10.5" stroke="#dedee0" stroke-width="5.6" stroke-linecap="round"/><path d="M10.8 11.6 L15.8 16.6" stroke="#dedee0" stroke-width="3"/><path d="M3.2 4.6 L9.8 10.5" stroke="#58585a" stroke-width="4.2" stroke-linecap="round"/><g fill="#bdbdbf"><rect x="4.6" y="4.4" width="0.9" height="0.9"/><rect x="6.1" y="5.8" width="0.9" height="0.9"/><rect x="7.6" y="7.2" width="0.9" height="0.9"/><rect x="3.4" y="5.8" width="0.9" height="0.9"/><rect x="4.9" y="7.2" width="0.9" height="0.9"/><rect x="6.4" y="8.6" width="0.9" height="0.9"/></g><path d="M10.8 11.6 L15.8 16.6" stroke="#58585a" stroke-width="1.7"/></svg>
<div class="t" style="left:20.5px;top:705px;font-size:12px;line-height:14px;color:#5a5a62;transform:scaleX(1.040)">Toolbox</div>
<div class="a" style="left:67px;top:702px;width:1px;height:19px;background:#c8c8ca;"></div>
<svg class="a" style="left:71px;top:705px" width="12" height="12" viewBox="0 0 12 12"><circle cx="5.9" cy="5.8" r="4.4" fill="#9aa0f0" stroke="#6e6e72" stroke-width="1"/></svg>
<div class="t" style="left:89.5px;top:705px;font-size:12px;line-height:14px;color:#5a5a62;transform:scaleX(0.954)">Project Data</div>
<div class="a" style="left:156px;top:702px;width:1px;height:19px;background:#c8c8ca;"></div>
<svg class="a" style="left:158px;top:703px" width="16" height="16" viewBox="0 0 16 16"><circle cx="8.1" cy="7.8" r="7.2" fill="#f0f0f0" stroke="#666" stroke-width="1.1"/><circle cx="8.1" cy="7.8" r="6" fill="#00c800"/><path d="M6 5.2 V10.8 L10.2 8Z" fill="#6a5a78"/></svg>
<div class="t" style="left:179.5px;top:705px;font-size:12px;line-height:14px;color:#5a5a62;transform:scaleX(1.014)">{New Animation} - TimeView - default</div>
<div class="a" style="left:384px;top:702px;width:1px;height:19px;background:#c8c8ca;"></div>
<svg class="a" style="left:384px;top:700px" width="20" height="20" viewBox="0 0 20 20"><rect x="4" y="3" width="12" height="2" fill="#58585a"/><path d="M8.9 5 H11.1 V11.5 L9.6 13.3 L8.9 12Z" fill="#58585a"/><path d="M16.7 9.7 L18 11 L10.2 18.6 L8.3 18.4 L8.6 16.6Z" fill="#58585a"/><path d="M15 11.6 L16.2 12.8 M13.5 13.1 L14.7 14.3" stroke="#c8c8ca" stroke-width="0.6"/></svg>
<div class="t" style="left:404.5px;top:705px;font-size:12px;line-height:14px;color:#5a5a62;transform:scaleX(1.006)">Text Editor</div>
<div class="a" style="left:465px;top:702px;width:1px;height:19px;background:#c8c8ca;"></div>
<svg class="a" style="left:465px;top:700px" width="20" height="20" viewBox="0 0 20 20"><path d="M5.1 3.9 H11.3 L15.1 8 V17.7 H5.1 Z" fill="#f2f2f4" stroke="#58585a" stroke-width="1.8" stroke-linejoin="round"/><path d="M11.3 3.9 V8 H15.1Z" fill="#58585a"/><g stroke="#ff1010" stroke-width="1.1" stroke-linecap="round"><path d="M7.4 10.4 H12.8"/><path d="M8.3 12.5 H11.9"/><path d="M7.4 14.4 H12.8"/></g></svg>
<div class="t" style="left:486.5px;top:705px;font-size:12px;line-height:14px;color:#5a5a62;transform:scaleX(0.933)">Messages</div>
<div class="a" style="left:541px;top:700px;width:96px;height:21px;background:#f2f2f4;"></div>
<svg class="a" style="left:541px;top:700px" width="20" height="20" viewBox="0 0 20 20"><path d="M10.00 2.80 L13.60 5.20 L10.05 7.50 L6.45 5.10Z" fill="#5a5a5c"/><path d="M6.45 5.10 L10.05 7.50 L6.50 9.80 L2.90 7.40Z" fill="#cfcfd1"/><path d="M13.60 5.20 L17.20 7.60 L13.65 9.90 L10.05 7.50Z" fill="#5a5a5c"/><path d="M10.05 7.50 L13.65 9.90 L10.10 12.20 L6.50 9.80Z" fill="#5a5a5c"/><path d="M2.90 7.40 L6.45 9.50 L6.45 13.30 L2.90 11.20Z" fill="#5c5c5e"/><path d="M2.90 11.20 L6.45 13.30 L6.45 17.10 L2.90 15.00Z" fill="#dcdcde"/><path d="M6.45 9.50 L10.00 11.60 L10.00 15.40 L6.45 13.30Z" fill="#dcdcde"/><path d="M6.45 13.30 L10.00 15.40 L10.00 19.20 L6.45 17.10Z" fill="#5c5c5e"/><path d="M10.00 11.60 L13.60 9.60 L13.60 13.30 L10.00 15.30Z" fill="#5a5a5c"/><path d="M10.00 15.30 L13.60 13.30 L13.60 17.00 L10.00 19.00Z" fill="#c8c8ca"/><path d="M13.60 9.60 L17.20 7.60 L17.20 11.30 L13.60 13.30Z" fill="#c8c8ca"/><path d="M13.60 13.30 L17.20 11.30 L17.20 15.00 L13.60 17.00Z" fill="#5a5a5c"/></svg>
<div class="t" style="left:562.5px;top:705px;font-size:12px;line-height:14px;color:#5a5a62;transform:scaleX(0.968)">Shader Editor</div>
</body></html>
